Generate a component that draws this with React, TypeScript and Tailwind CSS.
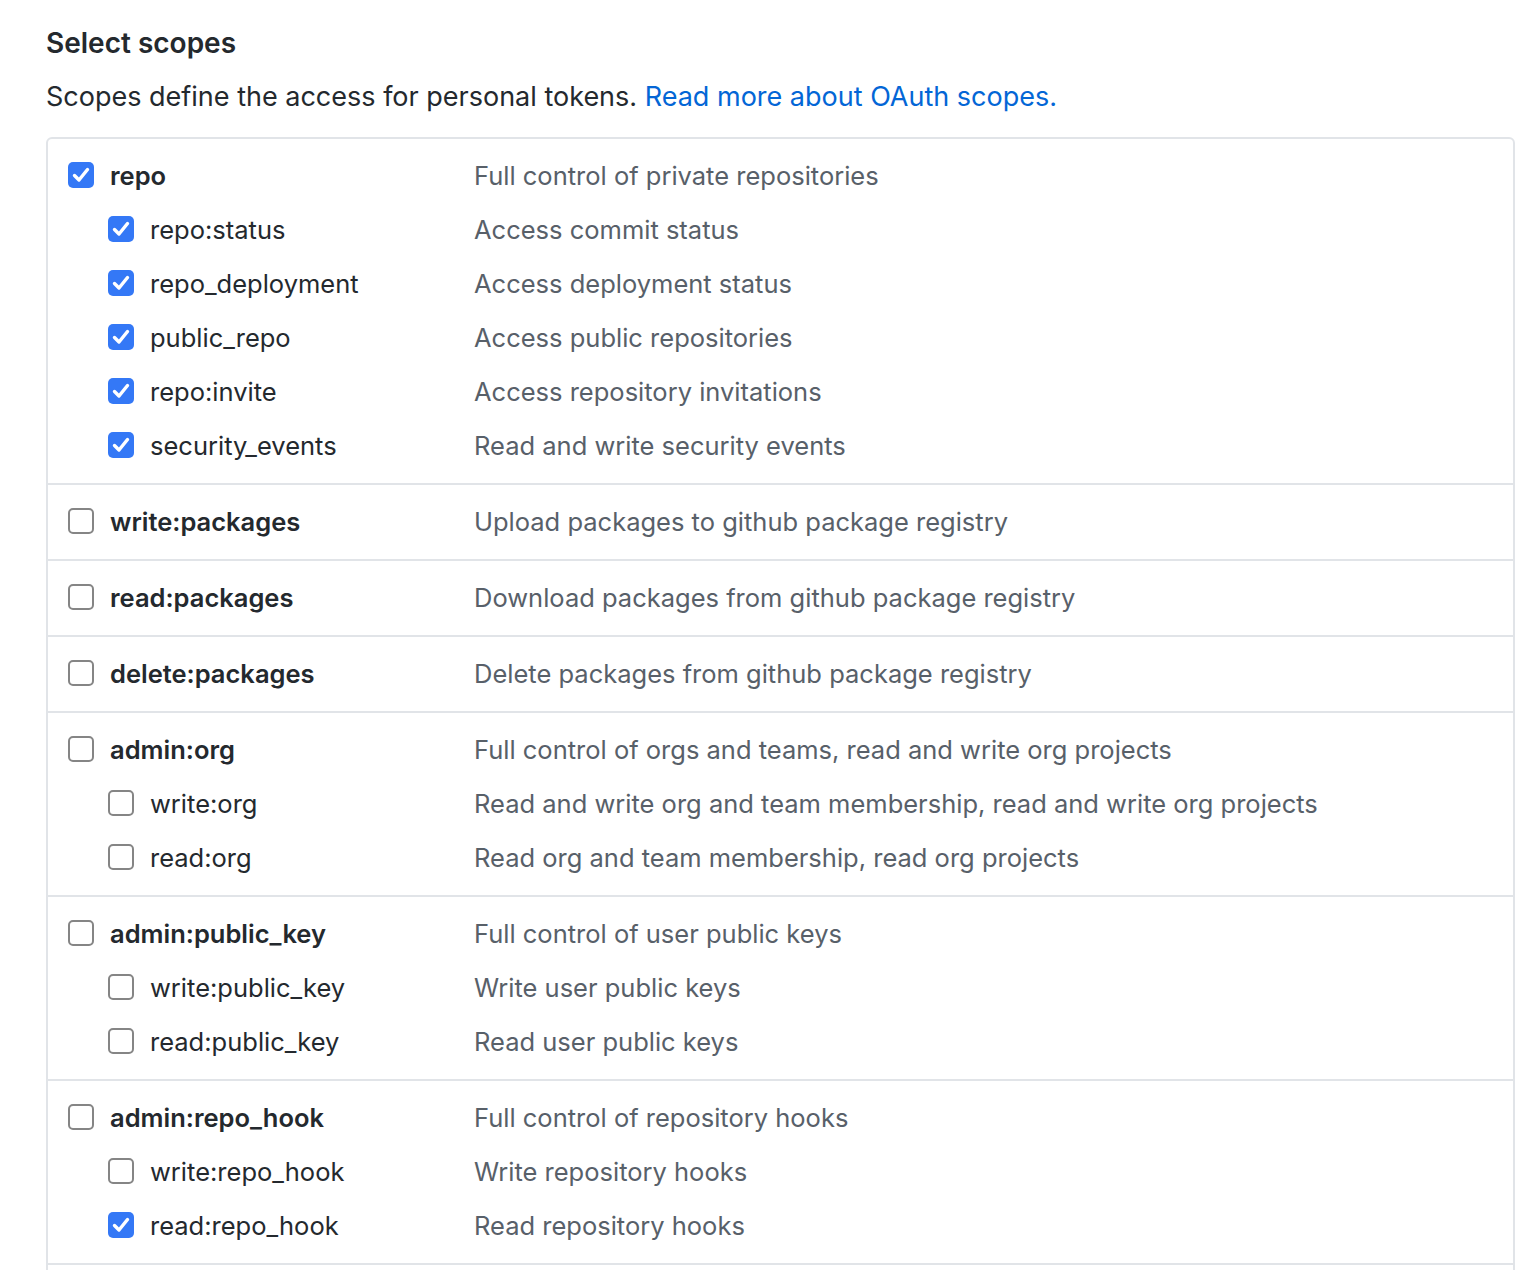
import React from "react";

type Scope = { name: string; description: string; checked: boolean };
type Group = { parent: Scope; children: Scope[] };

const groups: Group[] = [
  {
    parent: { name: "repo", description: "Full control of private repositories", checked: true },
    children: [
      { name: "repo:status", description: "Access commit status", checked: true },
      { name: "repo_deployment", description: "Access deployment status", checked: true },
      { name: "public_repo", description: "Access public repositories", checked: true },
      { name: "repo:invite", description: "Access repository invitations", checked: true },
      { name: "security_events", description: "Read and write security events", checked: true },
    ],
  },
  {
    parent: { name: "write:packages", description: "Upload packages to github package registry", checked: false },
    children: [],
  },
  {
    parent: { name: "read:packages", description: "Download packages from github package registry", checked: false },
    children: [],
  },
  {
    parent: { name: "delete:packages", description: "Delete packages from github package registry", checked: false },
    children: [],
  },
  {
    parent: { name: "admin:org", description: "Full control of orgs and teams, read and write org projects", checked: false },
    children: [
      { name: "write:org", description: "Read and write org and team membership, read and write org projects", checked: false },
      { name: "read:org", description: "Read org and team membership, read org projects", checked: false },
    ],
  },
  {
    parent: { name: "admin:public_key", description: "Full control of user public keys", checked: false },
    children: [
      { name: "write:public_key", description: "Write user public keys", checked: false },
      { name: "read:public_key", description: "Read user public keys", checked: false },
    ],
  },
  {
    parent: { name: "admin:repo_hook", description: "Full control of repository hooks", checked: false },
    children: [
      { name: "write:repo_hook", description: "Write repository hooks", checked: false },
      { name: "read:repo_hook", description: "Read repository hooks", checked: true },
    ],
  },
  {
    parent: { name: "admin:org_hook", description: "Full control of organization hooks", checked: false },
    children: [],
  },
];

function Checkbox({ checked }: { checked: boolean }) {
  if (checked) {
    return (
      <span className="-mt-[3px] flex h-[26px] w-[26px] shrink-0 items-center justify-center rounded-[5px] bg-[#3478f6]">
        <svg width="26" height="26" viewBox="0 0 26 26" fill="none">
          <path d="M6.5 13.5 L11 18 L19.5 7.5" stroke="white" strokeWidth="3.4" strokeLinecap="round" strokeLinejoin="round" />
        </svg>
      </span>
    );
  }
  return <span className="-mt-[3px] h-[26px] w-[26px] shrink-0 rounded-[5px] border-2 border-[#858585] bg-white" />;
}

function Row({ scope, child, bold }: { scope: Scope; child?: boolean; bold?: boolean }) {
  return (
    <div className="flex h-[54px] items-center">
      <div className={`flex w-[406px] shrink-0 items-center gap-4 ${child ? "pl-10" : ""}`}>
        <Checkbox checked={scope.checked} />
        <span className={`text-[#24292e] ${bold ? "font-semibold" : ""}`}>{scope.name}</span>
      </div>
      <span className="text-[#586069]">{scope.description}</span>
    </div>
  );
}

export default function App() {
  return (
    <div
      className="min-h-screen bg-white pl-[46px] pr-[15px] pt-[24px] text-[25.5px] leading-none"
      style={{ fontFamily: "Inter, 'Liberation Sans', sans-serif" }}
    >
      <h2 className="text-[28px] font-semibold leading-[38px] text-[#24292e]">Select scopes</h2>
      <p className="mt-[16px] text-[27px] leading-[38px] text-[#24292e]">
        Scopes define the access for personal tokens.{" "}
        <a href="#" className="text-[#0366d6]">
          Read more about OAuth scopes.
        </a>
      </p>
      <div className="mt-[21px] overflow-hidden rounded-[6px] border-2 border-[#e1e4e8]">
        {groups.map((g, i) => (
          <div
            key={g.parent.name}
            className={`pb-[10px] pl-[20px] pt-[10px] ${i > 0 ? "border-t-2 border-[#e1e4e8]" : ""}`}
          >
            <Row scope={g.parent} bold />
            {g.children.map((c) => (
              <Row key={c.name} scope={c} child />
            ))}
          </div>
        ))}
      </div>
    </div>
  );
}
